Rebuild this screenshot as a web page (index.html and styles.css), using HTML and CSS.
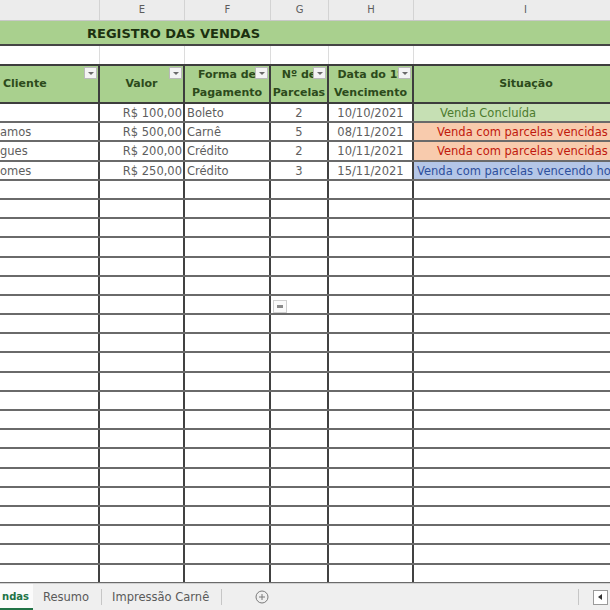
FILE: index.html
```html
<!DOCTYPE html>
<html lang="pt-BR">
<head>
  <meta charset="UTF-8" />
  <title>Registro das Vendas</title>
  <link rel="stylesheet" href="styles.css">
</head>
<body>
  <div class="sheet">
    <div class="line cols">
      <div></div><div>E</div><div>F</div><div>G</div><div>H</div><div>I</div>
    </div>

    <div class="title">REGISTRO DAS VENDAS</div>

    <div class="line gap">
      <div></div><div></div><div></div><div></div><div></div><div></div>
    </div>

    <div class="line head">
      <div class="hc left">Cliente<span class="flt"></span></div>
      <div class="hc">Valor<span class="flt"></span></div>
      <div class="hc">Forma de<br>Pagamento<span class="flt"></span></div>
      <div class="hc">Nº de<br>Parcelas<span class="flt"></span></div>
      <div class="hc">Data do 1º<br>Vencimento<span class="flt"></span></div>
      <div class="hc sit">Situação</div>
    </div>

    <div id="rows">
      <div class="line row">
        <div class="c name"></div>
        <div class="c money">R$ 100,00</div>
        <div class="c kind">Boleto</div>
        <div class="c mid">2</div>
        <div class="c mid">10/10/2021</div>
        <div class="c st st-ok">Venda Concluída</div>
      </div>
      <div class="line row">
        <div class="c name">amos</div>
        <div class="c money">R$ 500,00</div>
        <div class="c kind">Carnê</div>
        <div class="c mid">5</div>
        <div class="c mid">08/11/2021</div>
        <div class="c st st-late">Venda com parcelas vencidas</div>
      </div>
      <div class="line row">
        <div class="c name">gues</div>
        <div class="c money">R$ 200,00</div>
        <div class="c kind">Crédito</div>
        <div class="c mid">2</div>
        <div class="c mid">10/11/2021</div>
        <div class="c st st-late">Venda com parcelas vencidas</div>
      </div>
      <div class="line row">
        <div class="c name">omes</div>
        <div class="c money">R$ 250,00</div>
        <div class="c kind">Crédito</div>
        <div class="c mid">3</div>
        <div class="c mid">15/11/2021</div>
        <div class="c st st-soon">Venda com parcelas vencendo hoje</div>
      </div>
    </div>

    <span class="paste"></span>
  </div>

  <div class="tabs">
    <div class="tab tab-on"><span>ndas</span></div>
    <div class="tab">Resumo</div>
    <span class="sep"></span>
    <div class="tab">Impressão Carnê</div>
    <span class="sep"></span>
    <svg class="add" width="14" height="14" viewBox="0 0 14 14">
      <circle cx="7" cy="7" r="6" fill="none" stroke="#7a7a7a" stroke-width="1"/>
      <path d="M7 4v6M4 7h6" stroke="#7a7a7a" stroke-width="1"/>
    </svg>
    <span class="sep end"></span>
    <span class="mini"></span>
  </div>

  <script>
    // linhas vazias da planilha
    const rows = document.getElementById('rows');
    for (let i = 0; i < 21; i++) {
      rows.insertAdjacentHTML('beforeend',
        '<div class="line row"><div class="c"></div><div class="c"></div><div class="c"></div>' +
        '<div class="c"></div><div class="c"></div><div class="c"></div></div>');
    }
  </script>
</body>
</html>
```

FILE: styles.css
```css
* {
  box-sizing: border-box;
}
body {
  margin: 0;
  width: 610px;
  height: 610px;
  overflow: hidden;
  background: #fff;
  font-family: "DejaVu Sans", "Liberation Sans", sans-serif;
}
.sheet {
  position: relative;
  height: 583px;
  overflow: hidden;
}
.line {
  display: grid;
  grid-template-columns: 100px 85px 86px 58px 85px 224px;
  width: 638px;
}

/* letras das colunas */
.cols {
  height: 21px;
  background: #ececec;
  border-bottom: 1px solid #c8c8c8;
}
.cols div {
  border-right: 1px solid #d3d3d3;
  text-align: center;
  font-size: 10px;
  line-height: 20px;
  color: #5c5c5c;
}

.title {
  height: 25px;
  background: #a9d08e;
  border-bottom: 2px solid #454545;
  padding: 3px 0 0 87px;
  font-size: 13px;
  font-weight: bold;
  line-height: 19px;
  color: #1c3110;
  white-space: nowrap;
}

.gap {
  height: 18px;
}
.gap div {
  border-right: 1px solid #dcdcdc;
}

/* cabecalho da tabela */
.head {
  height: 40px;
  background: #a9d08e;
  border-top: 2px solid #3d3d3d;
  border-bottom: 2px solid #3d3d3d;
}
.hc {
  position: relative;
  display: flex;
  align-items: center;
  justify-content: center;
  border-right: 2px solid #3d3d3d;
  text-align: center;
  font-size: 11px;
  font-weight: bold;
  line-height: 18px;
  color: #2c4a1b;
  white-space: nowrap;
  overflow: hidden;
}
.hc.left {
  justify-content: flex-start;
  padding-left: 3px;
}
.hc.sit {
  border-right: none;
}
.flt {
  position: absolute;
  top: 1px;
  right: 1px;
  width: 13px;
  height: 12px;
  background: #f3f3f3;
  border: 1px solid #b9b9b9;
}
.flt::after {
  content: "";
  position: absolute;
  left: 3px;
  top: 4px;
  border-left: 3px solid transparent;
  border-right: 3px solid transparent;
  border-top: 3px solid #6a6a6a;
}

/* linhas de dados */
.row {
  height: 19.2px;
  border-bottom: 2px solid #6a6a6a;
}
.c {
  border-right: 2px solid #414141;
  font-size: 11.5px;
  line-height: 18px;
  color: #5e5e5e;
  white-space: nowrap;
  overflow: hidden;
}
.c:last-child {
  border-right: none;
}
.money {
  text-align: right;
  padding-right: 1px;
}
.kind {
  padding-left: 2px;
}
.mid {
  text-align: center;
}
.st-ok {
  background: #c6e0b4;
  color: #4d7c2e;
  padding-left: 26px;
}
.st-late {
  background: #f8cbad;
  color: #c0180c;
  padding-left: 23px;
}
.st-soon {
  background: #b4c6e7;
  color: #2d4f9c;
  padding-left: 3px;
}

.paste {
  position: absolute;
  left: 273px;
  top: 300px;
  width: 14px;
  height: 13px;
  background: #fafafa;
  border: 1px solid #cfcfcf;
}
.paste::after {
  content: "";
  position: absolute;
  left: 3px;
  top: 4px;
  width: 6px;
  height: 3px;
  background: #8a8a8a;
}

/* abas */
.tabs {
  height: 27px;
  display: flex;
  align-items: center;
  background: #efefef;
  border-top: 1px solid #d2d2d2;
  font-size: 11.5px;
  color: #5a5a5a;
}
.tab {
  padding: 0 12px 0 10px;
  white-space: nowrap;
}
.tab-on {
  align-self: stretch;
  display: flex;
  align-items: center;
  justify-content: flex-end;
  width: 33px;
  padding: 0 4px 0 0;
  background: #fbfbfb;
  border-bottom: 2px solid #217346;
  color: #217346;
  font-size: 10px;
  font-weight: bold;
}
.sep {
  width: 1px;
  height: 16px;
  background: #c6c6c6;
}
.add {
  margin-left: 33px;
}
.sep.end {
  margin-left: auto;
  margin-right: 14px;
}
.mini {
  position: relative;
  width: 15px;
  height: 15px;
  margin-right: 2px;
  background: #fff;
  border: 1px solid #9a9a9a;
}
.mini::after {
  content: "";
  position: absolute;
  left: 4px;
  top: 3px;
  border-top: 3px solid transparent;
  border-bottom: 3px solid transparent;
  border-right: 4px solid #333;
}
```
